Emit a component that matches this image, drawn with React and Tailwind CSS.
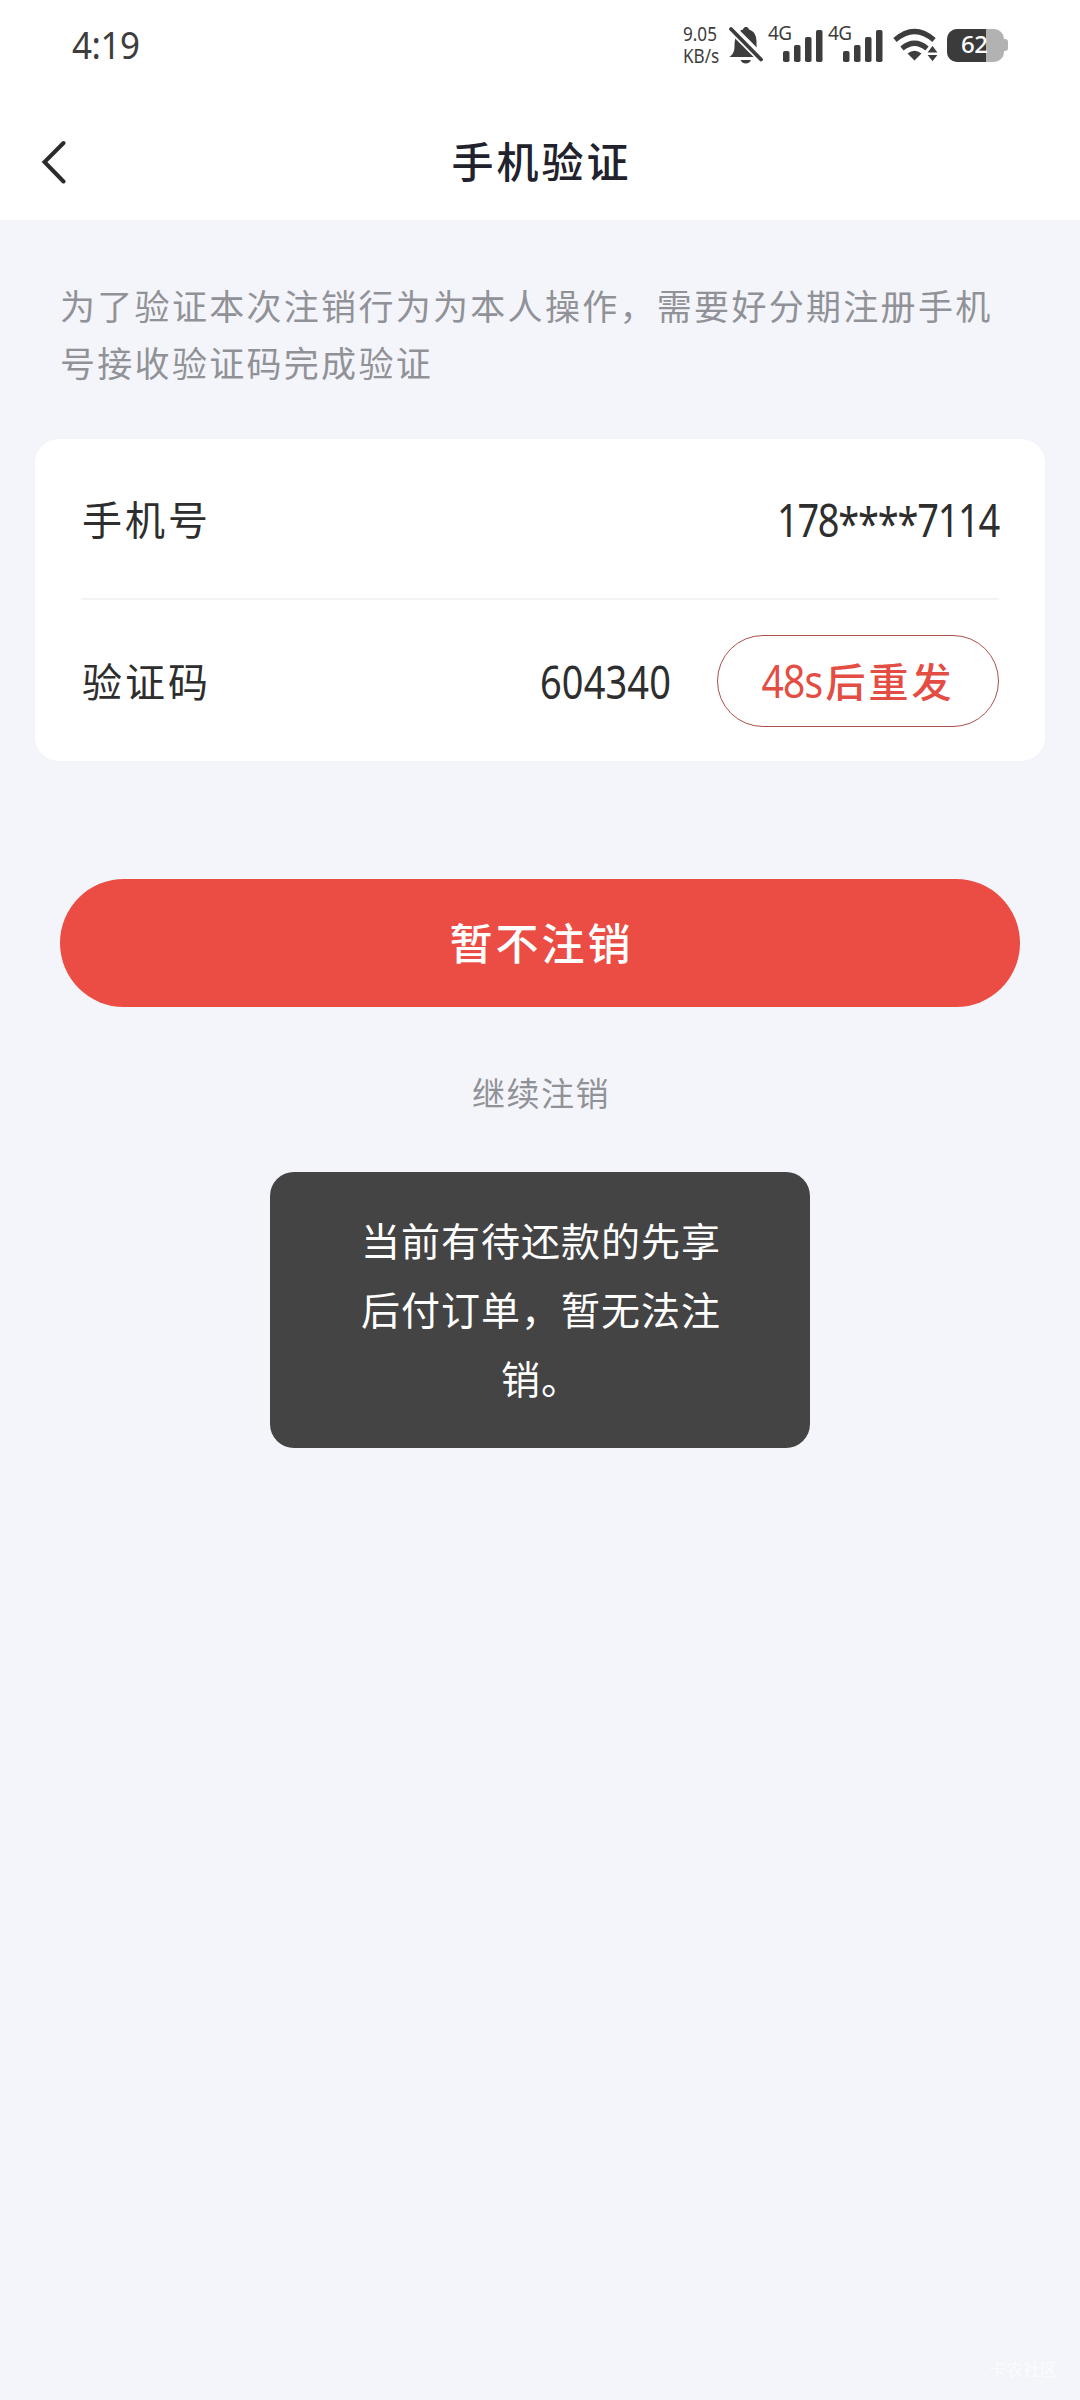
import React from 'react';

const SIGNAL_BARS = [
  { x: 0, y: 21 },
  { x: 11, y: 15 },
  { x: 22, y: 7 },
  { x: 33, y: 0 },
];

function MutedBellIcon() {
  return (
    <svg className="ml-[8px] h-[38px] w-[34px]" viewBox="0 0 34 38" fill="#3d3d3d">
      <path d="M0.500 31c4-3.200 5-6 5-11.500 0-9 4-15 8.500-16C14.500 1.500 16 1 17 1s2.500.5 3 2.500c5 1.500 7.500 6 7.500 12 0 8 0 12 5.500 15.500z" />
      <path d="M11.500 34h10.500c-1 2.500-3 3.500-5.200 3.500s-4.300-1-5.300-3.500z" />
      <path d="M1 1l33 33" stroke="#fff" strokeWidth="9" />
      <path d="M2 3l30 30.500" stroke="#3d3d3d" strokeWidth="3.800" strokeLinecap="round" />
    </svg>
  );
}

function Signal({ className }) {
  return (
    <div className={`relative h-[38px] w-[55px] ${className}`}>
      <span className="absolute top-[-2px] left-0 text-[19px] leading-[18px] tracking-[-0.5px]">4G</span>
      <svg className="absolute top-[4px] left-[15px] h-[32px] w-[40px]" viewBox="0 0 40 32" fill="#3d3d3d">
        {SIGNAL_BARS.map((bar) => (
          <rect key={bar.x} x={bar.x} y={bar.y} width="6.500" height={32 - bar.y} rx="1.800" />
        ))}
      </svg>
    </div>
  );
}

function WifiIcon() {
  return (
    <svg className="ml-[10px] h-[34px] w-[45px]" viewBox="0 0 45 34" fill="none" stroke="#3d3d3d">
      <path d="M2 12Q21.500-5 41 12" strokeWidth="5.200" />
      <path d="M9 20.500Q21.500 10 34 20.500" strokeWidth="5.200" />
      <path d="M14.500 25.500q7-5.500 14 0l-7 7z" fill="#3d3d3d" stroke="none" />
      <path d="M39.500 17l6 8h-12zM39.500 34l6-7.500h-12z" fill="#3d3d3d" stroke="#fff" strokeWidth="1.200" />
    </svg>
  );
}

function Battery() {
  return (
    <div className="relative ml-[9px] flex h-[33px] w-[62px] items-center">
      <div className="flex h-full w-[57px] overflow-hidden rounded-[10px] bg-[#b2b2b2]">
        <div className="h-full w-[39px] bg-[#3b3b3b]" />
      </div>
      <div className="h-[12px] w-[4px] rounded-r-[3px] bg-[#b2b2b2]" />
      <span className="absolute top-[-1px] left-[14px] text-[24px] leading-[32px] font-medium tracking-[-0.5px] text-white">62</span>
    </div>
  );
}

function StatusBar() {
  return (
    <div className="flex h-[90px] items-center justify-between pr-[71px] pl-[72px] text-[#3d3d3d]">
      <span className="-translate-y-[1px] scale-y-110 text-[35px] leading-none tracking-[-0.5px]">4:19</span>
      <div className="flex items-center">
        <div className="flex w-[38px] flex-col text-[19px] leading-[22px]">
          <span className="origin-left scale-x-[0.9]">9.05</span>
          <span className="origin-left scale-x-[0.9]">KB/s</span>
        </div>
        <MutedBellIcon />
        <Signal className="ml-[5px]" />
        <Signal className="ml-[5px]" />
        <WifiIcon />
        <Battery />
      </div>
    </div>
  );
}

function NavBar() {
  return (
    <div className="relative flex h-[130px] items-center justify-center pt-[14px] pl-[3px]">
      <button type="button" className="absolute top-[50px] left-[40px]" aria-label="返回">
        <svg className="h-[44px] w-[28px]" viewBox="0 0 28 44" fill="none" stroke="#2b2b2b" strokeWidth="4" strokeLinecap="round">
          <path d="M23.500 3L4.500 22l19 19.500" />
        </svg>
      </button>
      <h1 className="text-[42px] leading-none font-medium tracking-[3px] text-[#22222d]">手机验证</h1>
    </div>
  );
}

export default function App() {
  return (
    <div className="relative flex h-[2400px] w-[1080px] flex-col overflow-hidden bg-[#f4f5fa] font-['Noto_Sans','Noto_Sans_CJK_SC',sans-serif]">
      <header className="h-[220px] bg-white">
        <StatusBar />
        <NavBar />
      </header>

      <p className="mt-[58px] ml-[60px] h-[114px] text-[35px] leading-[57px] tracking-[2.300px] text-[#919297]">
        为了验证本次注销行为为本人操作，需要好分期注册手机
        <br />
        号接收验证码完成验证
      </p>

      <section className="mx-[35px] mt-[47px] h-[322px] rounded-[24px] bg-white pr-[46px] pl-[46px] text-[40px] leading-none text-[#2e2e2e]">
        <div className="flex h-[161px] items-center justify-between border-b-2 border-[#f3f3f4]">
          <span className="translate-y-[1px] pl-[1px] tracking-[3px]">手机号</span>
          <span className="flex scale-y-[1.200] items-center text-[38px] tracking-[-1.300px]">
            178
            <span className="translate-y-[3px] tracking-[-1.200px]">****</span>
            7114
          </span>
        </div>
        <div className="flex h-[161px] items-center">
          <span className="translate-y-[1px] pl-[1px] tracking-[3px]">验证码</span>
          <span className="ml-auto scale-y-[1.200] text-[38px] tracking-[0.100px]">604340</span>
          <button
            type="button"
            className="ml-[46px] flex h-[92px] w-[282px] items-center justify-center rounded-full border-[1.500px] border-[#ad4f4b] text-[#e34d43]"
          >
            <span className="mr-[3px] scale-y-[1.150] text-[39px] tracking-[-0.800px]">48s</span>
            <span className="translate-y-[1px] font-medium tracking-[3px]">后重发</span>
          </button>
        </div>
      </section>

      <button
        type="button"
        className="mx-[60px] mt-[118px] h-[128px] rounded-full bg-[#eb4d44] pl-[3px] text-[43px] leading-none font-medium tracking-[3px] text-white"
      >
        暂不注销
      </button>
      <button type="button" className="mt-[67px] self-center pl-[2px] text-[33px] leading-[40px] tracking-[1.500px] text-[#919297]">
        继续注销
      </button>

      <div className="mt-[58px] w-[540px] self-center rounded-[24px] bg-[#444444] pt-[34px] pr-[88px] pb-[35px] pl-[90px] text-center text-[39px] leading-[69px] tracking-[1px] text-white">
        当前有待还款的先享后付订单，暂无法注销。
      </div>

      <span className="absolute right-[23px] bottom-[20px] text-[17px] leading-[20px] text-white/70">卡农社区</span>
    </div>
  );
}
